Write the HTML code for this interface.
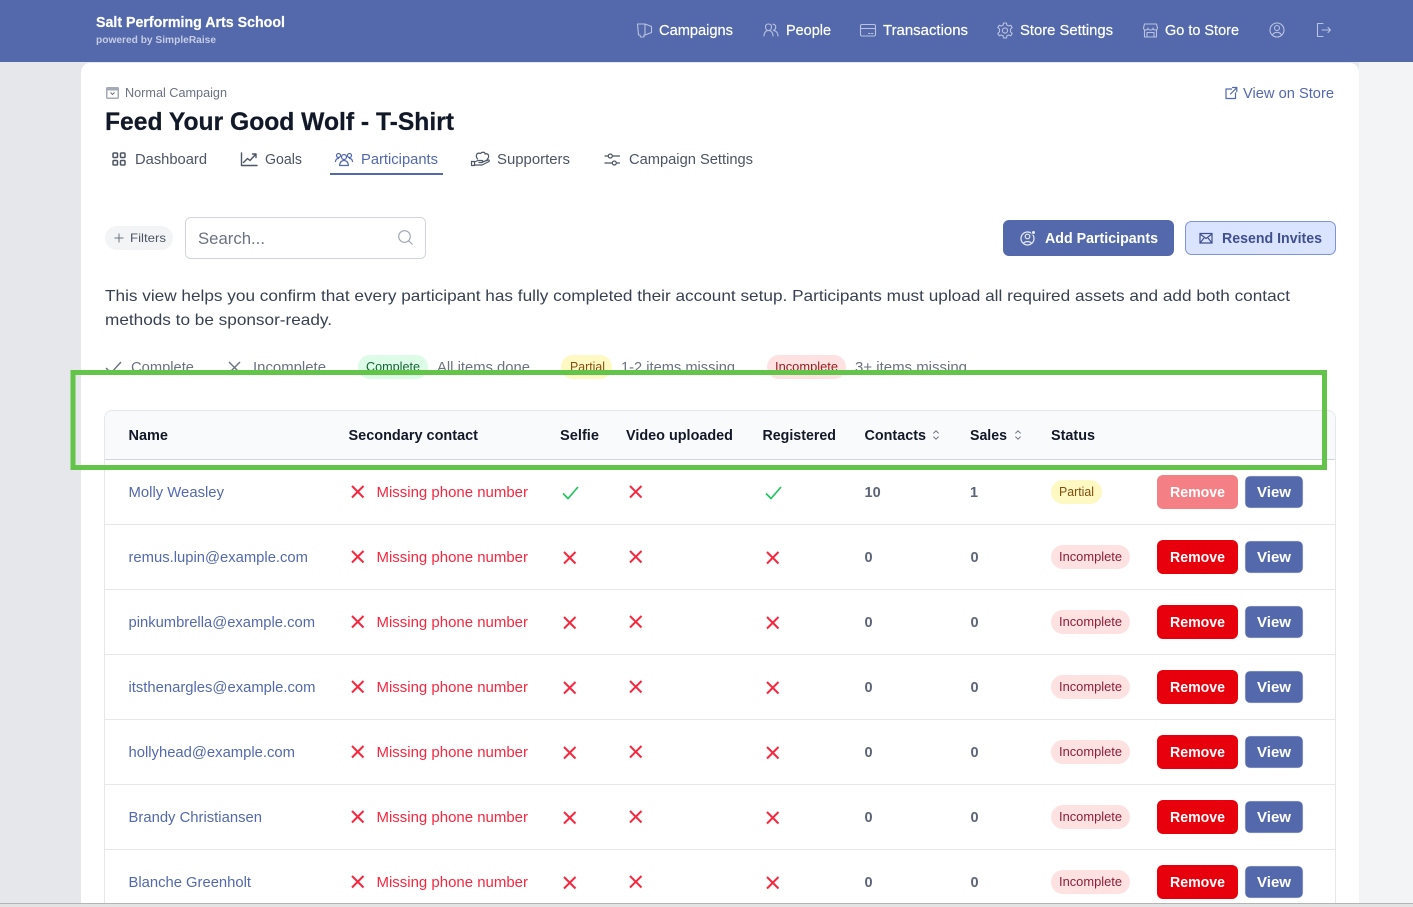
<!DOCTYPE html>
<html lang="en"><head><meta charset="utf-8"><title>Feed Your Good Wolf - T-Shirt</title>
<style>
html,body{margin:0;padding:0;width:1413px;height:907px;overflow:hidden;background:#e5e7eb}
svg{display:block}
text{font-family:"Liberation Sans",sans-serif;font-size:14.5px;white-space:pre}
.nav{fill:#fff;font-size:14.5px;stroke:#fff;stroke-width:.2px}
.tab{fill:#4b5563}
.lg{fill:#6b7280}
.th{fill:#111827;font-weight:700}
.nm{fill:#5469ac}
.ms{fill:#f6273f}
.num{fill:#5b6577;font-weight:700;font-size:14.5px}
.pt{font-size:12.5px}
.bt{fill:#fff;font-weight:700}
.hi{fill:none;stroke:#b9c2de;stroke-width:1.1;stroke-linecap:round;stroke-linejoin:round}
.ti{fill:none;stroke:#4b5563;stroke-width:1.2;stroke-linecap:round;stroke-linejoin:round}
.ti2{fill:none;stroke:#5469ac;stroke-width:1.2;stroke-linecap:round;stroke-linejoin:round}
</style></head><body>
<svg width="1413" height="907" viewBox="0 0 1413 907" xmlns="http://www.w3.org/2000/svg">
<defs>
<g id="x"><path d="M1 1L12.500 12.500M12.500 1L1 12.500" fill="none" stroke="#f6273f" stroke-width="2"/></g>
<g id="c"><path d="M1 8.500L6 13.500L16 2" fill="none" stroke="#22c55e" stroke-width="1.700"/></g>
<g id="s"><path d="M-2.600 -1.600L0 -4.200L2.600 -1.600M-2.600 1.600L0 4.200L2.600 1.600" fill="none" stroke="#6b7280" stroke-width="1"/></g>
<g id="pi"><rect x="0" y="0" width="79" height="24" rx="12" fill="#fee2e2"/><text x="8" y="16" class="pt" fill="#8f1d3a" textLength="63" lengthAdjust="spacingAndGlyphs">Incomplete</text></g>
<g id="bb"><rect x="0" y="0" width="81" height="34" rx="6" fill="#e7000b"/><text x="13" y="22" class="bt" textLength="55" lengthAdjust="spacingAndGlyphs">Remove</text><rect x="88" y="1" width="58" height="32" rx="5" fill="#5469ac" stroke="#e5e7eb" stroke-width=".6"/><text x="100" y="22" class="bt" textLength="34" lengthAdjust="spacingAndGlyphs">View</text></g>
</defs>

<rect width="1413" height="907" fill="#e5e7eb"/>
<rect x="1359" y="62" width="54" height="845" fill="#f3f4f6"/>
<rect x="81" y="63" width="1278" height="860" rx="9" fill="#fff"/>
<rect x="0" y="0" width="1413" height="62" fill="#5469ac"/>

<!-- header -->
<text x="96" y="27" fill="#fff" font-weight="700" stroke="#fff" stroke-width=".2" style="font-size:14.500px" textLength="189" lengthAdjust="spacingAndGlyphs">Salt Performing Arts School</text>
<text x="96" y="43" fill="#c6cce4" font-weight="700" style="font-size:10.500px" textLength="120" lengthAdjust="spacingAndGlyphs">powered by SimpleRaise</text>

<path class="hi" d="M637.500 24H645L651.500 26.500V32.500L645 35H644V37H640.500L640 35H638.500ZM645 24V35"/>
<text x="659" y="35" class="nav" textLength="74" lengthAdjust="spacingAndGlyphs">Campaigns</text>
<path class="hi" d="M764 36C764 32.500 766 30.500 768.500 30.500S773 32.500 773 36M768.500 30.500C766.700 30.500 765.500 29 765.500 27S766.700 24 768.500 24S771.500 25 771.500 27S770.300 30.500 768.500 30.500ZM773 24.200C774.800 24.500 775.700 25.500 775.700 27C775.700 28.500 774.900 29.800 773.500 30.300C776 30.800 778 32.800 778 36"/>
<text x="786" y="35" class="nav" textLength="45" lengthAdjust="spacingAndGlyphs">People</text>
<path class="hi" d="M862 24.500H874A1.500 1.500 0 0 1 875.500 26V34.500A1.500 1.500 0 0 1 874 36H862A1.500 1.500 0 0 1 860.500 34.500V26A1.500 1.500 0 0 1 862 24.500ZM860.500 28.500H875.500M868.500 33.500H870M871.500 33.500H873"/>
<text x="883" y="35" class="nav" textLength="85" lengthAdjust="spacingAndGlyphs">Transactions</text>
<circle class="hi" cx="1005" cy="30.500" r="2.600"/>
<path class="hi" d="M1003.600 23H1006.400L1006.900 25.100L1008.700 26L1010.700 25.200L1012.200 27.600L1010.500 29V31.900L1012.200 33.400L1010.700 35.800L1008.700 35L1006.900 35.900L1006.400 38H1003.600L1003.100 35.900L1001.300 35L999.300 35.800L997.800 33.400L999.500 31.900V29L997.800 27.600L999.300 25.200L1001.300 26L1003.100 25.100Z"/>
<text x="1020" y="35" class="nav" textLength="93" lengthAdjust="spacingAndGlyphs">Store Settings</text>
<path class="hi" d="M1144.500 24H1156.500L1157.500 28C1157.500 29.500 1156 30 1155 30S1153 29.500 1153 28C1153 29.500 1151.500 30 1150.500 30S1148 29.500 1148 28C1148 29.500 1147 30 1146 30S1143.500 29.500 1143.500 28ZM1144.500 30V37H1156.500V30M1147 32.500H1154V37H1147Z"/>
<text x="1165" y="35" class="nav" textLength="74" lengthAdjust="spacingAndGlyphs">Go to Store</text>
<circle class="hi" cx="1277" cy="30" r="7"/><circle class="hi" cx="1277" cy="28" r="2.500"/><path class="hi" d="M1272.500 35C1273.500 33 1275 32.300 1277 32.300S1280.500 33 1281.500 35"/>
<path class="hi" d="M1323 23.500H1317.500V36.500H1323M1322 30H1330.500M1328 27.500L1330.500 30L1328 32.500"/>

<!-- campaign head -->
<rect x="106" y="87" width="13" height="12" rx="1.500" fill="#a5abb6"/>
<rect x="107.500" y="90.500" width="10" height="7" fill="#fff"/>
<path d="M110.500 92.500L112.500 94.500L114.500 92.500" fill="none" stroke="#6b7280" stroke-width="1"/>
<text x="125" y="97" class="lg" style="font-size:12.500px" textLength="102" lengthAdjust="spacingAndGlyphs">Normal Campaign</text>
<text x="105" y="130" fill="#111827" font-weight="700" stroke="#111827" stroke-width=".25" style="font-size:25px" textLength="349" lengthAdjust="spacingAndGlyphs">Feed Your Good Wolf - T-Shirt</text>
<path class="ti2" d="M1231.500 89H1226V98.500H1235.500V93M1230.500 94L1236.500 88M1232.500 87.500H1236.800V91.800"/>
<text x="1243" y="98" class="nm" textLength="91" lengthAdjust="spacingAndGlyphs">View on Store</text>

<!-- tabs -->
<g class="ti" style="stroke-width:1.500"><rect x="113" y="153" width="4.500" height="4.500" rx="1"/><rect x="120.500" y="153" width="4.500" height="4.500" rx="1"/><rect x="113" y="160.500" width="4.500" height="4.500" rx="1"/><rect x="120.500" y="160.500" width="4.500" height="4.500" rx="1"/></g>
<text x="135" y="164" class="tab" textLength="72" lengthAdjust="spacingAndGlyphs">Dashboard</text>
<path class="ti" style="stroke-width:1.400" d="M241.500 153V165.500H257M243.500 162.500L247.500 158.500L250 160.500L255.500 154.500M252.500 154H256V157.500"/>
<text x="265" y="164" class="tab" textLength="37" lengthAdjust="spacingAndGlyphs">Goals</text>
<g class="ti2"><circle cx="344" cy="157" r="2.500"/><path d="M339.500 165.500C340 162 341.500 160.500 344 160.500S348 162 348.500 165.500Z"/><circle cx="338.500" cy="155.500" r="2"/><circle cx="349.500" cy="155.500" r="2"/><path d="M335.500 161.500C335.800 159.500 336.800 158.500 338.500 158.500M352.500 161.500C352.200 159.500 351.200 158.500 349.500 158.500"/></g>
<text x="361" y="164" class="nm" textLength="77" lengthAdjust="spacingAndGlyphs">Participants</text>
<rect x="330" y="173" width="113" height="2" fill="#5469ac"/>
<path class="ti" d="M471.500 161.500H474.500V165.500H471.500ZM474.500 162L478 160.500H482C483 160.500 483 162.500 482 162.500H479M474.500 165H482L489 161.500C489.800 160.500 488.800 159.500 488 160L482.500 162M477.500 159C475 155.500 477 152 480.500 153.500C482 151.500 485.500 152 485 154C488.500 153 490 156.500 487 159.500"/>
<text x="497" y="164" class="tab" textLength="73" lengthAdjust="spacingAndGlyphs">Supporters</text>
<g class="ti"><path d="M605 156H608M612.500 156H619.500M605 163H612M616.500 163H619.500"/><circle cx="610.300" cy="156" r="2"/><circle cx="614.300" cy="163" r="2"/></g>
<text x="629" y="164" class="tab" textLength="124" lengthAdjust="spacingAndGlyphs">Campaign Settings</text>

<!-- toolbar -->
<rect x="105" y="226" width="68" height="24" rx="12" fill="#f3f4f6"/>
<path d="M119 233.500V242.500M114.500 238H123.500" stroke="#6b7280" stroke-width="1"/>
<text x="130" y="242" fill="#4b5563" style="font-size:12px" textLength="36" lengthAdjust="spacingAndGlyphs">Filters</text>
<rect x="185.500" y="217.500" width="240" height="41" rx="5" fill="#fff" stroke="#d1d5db"/>
<text x="198" y="244" fill="#6b7280" style="font-size:16.500px" textLength="67" lengthAdjust="spacingAndGlyphs">Search...</text>
<circle cx="404.500" cy="236.500" r="5.800" fill="none" stroke="#9ca3af" stroke-width="1.100"/><path d="M408.800 240.800L412.500 244.500" stroke="#9ca3af" stroke-width="1.100"/>

<rect x="1003" y="220" width="171" height="36" rx="6" fill="#5469ac"/>
<circle cx="1027.500" cy="238.500" r="6.500" fill="none" stroke="#e8ebf5" stroke-width="1.200"/><circle cx="1027.500" cy="236.500" r="2.300" fill="none" stroke="#e8ebf5" stroke-width="1.200"/><path d="M1023.500 243.500C1024.500 241 1030.500 241 1031.500 243.500" fill="none" stroke="#e8ebf5" stroke-width="1.200"/><circle cx="1033.500" cy="232.500" r="2" fill="#e8ebf5" stroke="#5469ac"/>
<text x="1045" y="243" class="bt" textLength="113" lengthAdjust="spacingAndGlyphs">Add Participants</text>
<rect x="1185.500" y="221.500" width="150" height="33" rx="6" fill="#dbe4fe" stroke="#7f93dc"/>
<path d="M1200 233.500H1212V243H1200ZM1200 234L1206 238.500L1212 234M1200 243L1204 238M1212 243L1208 238" fill="none" stroke="#3f4f8f" stroke-width="1.200"/>
<text x="1222" y="243" fill="#3f4f8f" font-weight="700" textLength="100" lengthAdjust="spacingAndGlyphs">Resend Invites</text>

<!-- paragraph -->
<text x="105" y="301" fill="#374151" style="font-size:16px" textLength="1185" lengthAdjust="spacingAndGlyphs">This view helps you confirm that every participant has fully completed their account setup. Participants must upload all required assets and add both contact</text>
<text x="105" y="325" fill="#374151" style="font-size:16px" textLength="227" lengthAdjust="spacingAndGlyphs">methods to be sponsor-ready.</text>

<!-- legend -->
<path d="M106 368L111 373L121 362" fill="none" stroke="#6b7280" stroke-width="1.400"/>
<text x="131" y="372" class="lg" textLength="63" lengthAdjust="spacingAndGlyphs">Complete</text>
<path d="M229 362L240 373M240 362L229 373" fill="none" stroke="#6b7280" stroke-width="1.400"/>
<text x="253" y="372" class="lg" textLength="73" lengthAdjust="spacingAndGlyphs">Incomplete</text>
<rect x="358" y="355" width="70" height="24" rx="12" fill="#dcfce7"/>
<text x="366" y="371" fill="#166534" class="pt" textLength="54" lengthAdjust="spacingAndGlyphs">Complete</text>
<text x="437" y="372" class="lg" textLength="93" lengthAdjust="spacingAndGlyphs">All items done</text>
<rect x="561" y="355" width="51" height="24" rx="12" fill="#fef9c3"/>
<text x="570" y="371" fill="#854d0e" class="pt" textLength="35" lengthAdjust="spacingAndGlyphs">Partial</text>
<text x="621" y="372" class="lg" textLength="114" lengthAdjust="spacingAndGlyphs">1-2 items missing</text>
<rect x="767" y="355" width="79" height="24" rx="12" fill="#fee2e2"/>
<text x="775" y="371" fill="#991b1b" class="pt" textLength="63" lengthAdjust="spacingAndGlyphs">Incomplete</text>
<text x="855" y="372" class="lg" textLength="112" lengthAdjust="spacingAndGlyphs">3+ items missing</text>

<!-- table -->
<path d="M104.500 915V418.500A8 8 0 0 1 112.500 410.500H1327.500A8 8 0 0 1 1335.500 418.500V915" fill="#fff" stroke="#e5e7eb"/>
<path d="M105 459V418.500A7.500 7.500 0 0 1 112.500 411H1327.500A7.500 7.500 0 0 1 1335 418.500V459Z" fill="#f9fafb"/>
<rect x="105" y="459" width="1230" height="1" fill="#d1d5db"/>
<g fill="#e5e7eb"><rect x="105" y="524" width="1230" height="1"/><rect x="105" y="589" width="1230" height="1"/><rect x="105" y="654" width="1230" height="1"/><rect x="105" y="719" width="1230" height="1"/><rect x="105" y="784" width="1230" height="1"/><rect x="105" y="849" width="1230" height="1"/></g>

<text x="128.500" y="440" class="th" textLength="39.500" lengthAdjust="spacingAndGlyphs">Name</text>
<text x="348.500" y="440" class="th" textLength="129.500" lengthAdjust="spacingAndGlyphs">Secondary contact</text>
<text x="560" y="440" class="th" textLength="39" lengthAdjust="spacingAndGlyphs">Selfie</text>
<text x="626" y="440" class="th" textLength="107" lengthAdjust="spacingAndGlyphs">Video uploaded</text>
<text x="762.500" y="440" class="th" textLength="73.500" lengthAdjust="spacingAndGlyphs">Registered</text>
<text x="864.500" y="440" class="th" textLength="61.500" lengthAdjust="spacingAndGlyphs">Contacts</text>
<use href="#s" x="936" y="435"/>
<text x="970" y="440" class="th" textLength="37" lengthAdjust="spacingAndGlyphs">Sales</text>
<use href="#s" x="1018" y="435"/>
<text x="1051" y="440" class="th" textLength="44" lengthAdjust="spacingAndGlyphs">Status</text>

<!-- row 1 -->
<text x="128.500" y="497" class="nm" textLength="95.500" lengthAdjust="spacingAndGlyphs">Molly Weasley</text>
<use href="#x" x="351" y="485"/><text x="376.500" y="497" class="ms" textLength="151.500" lengthAdjust="spacingAndGlyphs">Missing phone number</text>
<use href="#c" x="562" y="485"/><use href="#x" x="629" y="485"/><use href="#c" x="765" y="485"/>
<text x="864.500" y="497" class="num">10</text><text x="970" y="497" class="num">1</text>
<rect x="1051" y="480" width="51" height="24" rx="12" fill="#fef9c3"/><text x="1059" y="496" fill="#854d0e" class="pt" textLength="35" lengthAdjust="spacingAndGlyphs">Partial</text>
<g transform="translate(1157 475)"><rect width="81" height="34" rx="6" fill="#f47f85"/><text x="13" y="22" class="bt" textLength="55" lengthAdjust="spacingAndGlyphs">Remove</text><rect x="88" y="1" width="58" height="32" rx="5" fill="#5469ac" stroke="#e5e7eb" stroke-width=".6"/><text x="100" y="22" class="bt" textLength="34" lengthAdjust="spacingAndGlyphs">View</text></g>

<!-- row 2 -->
<text x="128.500" y="562" class="nm" textLength="179.500" lengthAdjust="spacingAndGlyphs">remus.lupin@example.com</text>
<use href="#x" x="351" y="550"/><text x="376.500" y="562" class="ms" textLength="151.500" lengthAdjust="spacingAndGlyphs">Missing phone number</text>
<use href="#x" x="563" y="551"/><use href="#x" x="629" y="550"/><use href="#x" x="766" y="551"/>
<text x="864.500" y="562" class="num">0</text><text x="970.500" y="562" class="num">0</text>
<use href="#pi" x="1051" y="545"/><use href="#bb" x="1157" y="540"/>

<!-- row 3 -->
<text x="128.500" y="627" class="nm" textLength="186.500" lengthAdjust="spacingAndGlyphs">pinkumbrella@example.com</text>
<use href="#x" x="351" y="615"/><text x="376.500" y="627" class="ms" textLength="151.500" lengthAdjust="spacingAndGlyphs">Missing phone number</text>
<use href="#x" x="563" y="616"/><use href="#x" x="629" y="615"/><use href="#x" x="766" y="616"/>
<text x="864.500" y="627" class="num">0</text><text x="970.500" y="627" class="num">0</text>
<use href="#pi" x="1051" y="610"/><use href="#bb" x="1157" y="605"/>

<!-- row 4 -->
<text x="128.500" y="692" class="nm" textLength="187" lengthAdjust="spacingAndGlyphs">itsthenargles@example.com</text>
<use href="#x" x="351" y="680"/><text x="376.500" y="692" class="ms" textLength="151.500" lengthAdjust="spacingAndGlyphs">Missing phone number</text>
<use href="#x" x="563" y="681"/><use href="#x" x="629" y="680"/><use href="#x" x="766" y="681"/>
<text x="864.500" y="692" class="num">0</text><text x="970.500" y="692" class="num">0</text>
<use href="#pi" x="1051" y="675"/><use href="#bb" x="1157" y="670"/>

<!-- row 5 -->
<text x="128.500" y="757" class="nm" textLength="166.500" lengthAdjust="spacingAndGlyphs">hollyhead@example.com</text>
<use href="#x" x="351" y="745"/><text x="376.500" y="757" class="ms" textLength="151.500" lengthAdjust="spacingAndGlyphs">Missing phone number</text>
<use href="#x" x="563" y="746"/><use href="#x" x="629" y="745"/><use href="#x" x="766" y="746"/>
<text x="864.500" y="757" class="num">0</text><text x="970.500" y="757" class="num">0</text>
<use href="#pi" x="1051" y="740"/><use href="#bb" x="1157" y="735"/>

<!-- row 6 -->
<text x="128.500" y="822" class="nm" textLength="133.500" lengthAdjust="spacingAndGlyphs">Brandy Christiansen</text>
<use href="#x" x="351" y="810"/><text x="376.500" y="822" class="ms" textLength="151.500" lengthAdjust="spacingAndGlyphs">Missing phone number</text>
<use href="#x" x="563" y="811"/><use href="#x" x="629" y="810"/><use href="#x" x="766" y="811"/>
<text x="864.500" y="822" class="num">0</text><text x="970.500" y="822" class="num">0</text>
<use href="#pi" x="1051" y="805"/><use href="#bb" x="1157" y="800"/>

<!-- row 7 -->
<text x="128.500" y="887" class="nm" textLength="122.500" lengthAdjust="spacingAndGlyphs">Blanche Greenholt</text>
<use href="#x" x="351" y="875"/><text x="376.500" y="887" class="ms" textLength="151.500" lengthAdjust="spacingAndGlyphs">Missing phone number</text>
<use href="#x" x="563" y="876"/><use href="#x" x="629" y="875"/><use href="#x" x="766" y="876"/>
<text x="864.500" y="887" class="num">0</text><text x="970.500" y="887" class="num">0</text>
<use href="#pi" x="1051" y="870"/><use href="#bb" x="1157" y="865"/>

<!-- annotation box -->
<rect x="73" y="372.500" width="1251.500" height="95" fill="none" stroke="#62c54a" stroke-width="5"/>

<!-- bottom strip -->
<rect x="0" y="903" width="1413" height="1" fill="#b4b4b4"/>
<rect x="0" y="904" width="1413" height="3" fill="#e3e3e3"/>
</svg>
</body></html>
